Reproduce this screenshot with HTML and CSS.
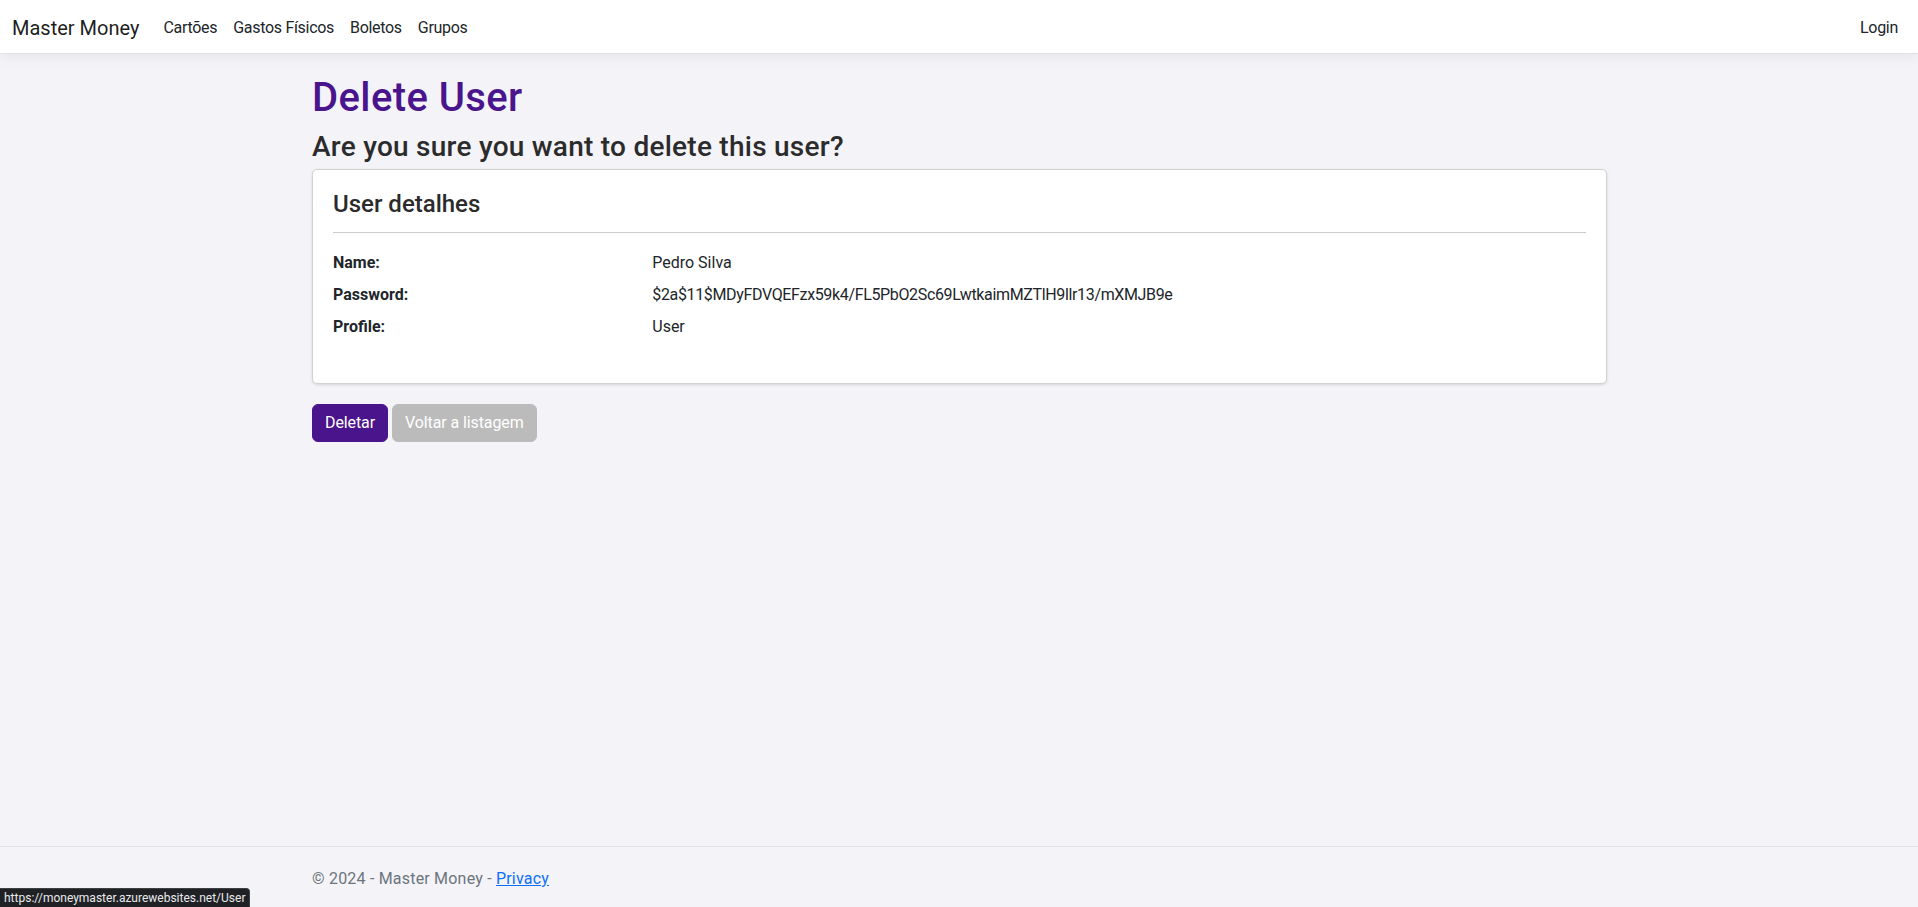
FILE: index.html
```html
<!DOCTYPE html>
<html lang="pt">
<head>
<meta charset="utf-8">
<title>Delete User - Master Money</title>
<link rel="stylesheet" href="styles.css">
</head>
<body>
<header class="navbar">
  <a class="brand" href="#">Master Money</a>
  <nav class="nav-links">
    <a class="nav-link" href="#">Cartões</a>
    <a class="nav-link" href="#">Gastos Físicos</a>
    <a class="nav-link" href="#">Boletos</a>
    <a class="nav-link" href="#">Grupos</a>
  </nav>
  <a class="nav-link login" href="#">Login</a>
</header>

<main class="container">
  <h1 class="title">Delete User</h1>
  <h3 class="question">Are you sure you want to delete this user?</h3>

  <section class="card">
    <h4 class="card-title">User detalhes</h4>
    <hr class="divider">
    <dl class="details">
      <dt>Name:</dt>
      <dd>Pedro Silva</dd>
      <dt>Password:</dt>
      <dd class="hash">$2a$11$MDyFDVQEFzx59k4/FL5PbO2Sc69LwtkaimMZTlH9llr13/mXMJB9e</dd>
      <dt>Profile:</dt>
      <dd>User</dd>
    </dl>
  </section>

  <div class="actions">
    <button class="btn btn-primary" type="button">Deletar</button>
    <a class="btn btn-secondary" href="#">Voltar a listagem</a>
  </div>
</main>

<footer class="footer">
  <div class="container footer-text">&copy; 2024 - Master Money - <a class="footer-link" href="#">Privacy</a></div>
</footer>

<div class="status-url">https://moneymaster.azurewebsites.net/User</div>
</body>
</html>
```

FILE: styles.css
```css
* {
  box-sizing: border-box;
}

html, body {
  margin: 0;
  padding: 0;
}

body {
  position: relative;
  min-height: 907px;
  background: #f4f3f8;
  color: #212529;
  font-family: Roboto, "Liberation Sans", Arial, sans-serif;
  font-size: 16px;
  line-height: 1.5;
}

a {
  text-decoration: none;
}

.navbar {
  display: flex;
  align-items: center;
  height: 54px;
  padding: 2px 12px 0;
  background: #ffffff;
  border-bottom: 1px solid #dee2e6;
  box-shadow: 0 4px 12px rgba(0, 0, 0, 0.05);
}

.brand {
  font-size: 20px;
  line-height: 30px;
  color: rgba(0, 0, 0, 0.9);
  margin-right: 16px;
}

.nav-links {
  display: flex;
}

.nav-link {
  padding: 8px;
  color: #212529;
  font-size: 16px;
  line-height: 24px;
  letter-spacing: -0.3px;
}

.login {
  margin-left: auto;
}

.container {
  width: 1320px;
  margin: 0 auto;
  padding: 0 12px 0 13px;
}

main.container {
  padding-top: 20px;
}

.title {
  margin: 0 0 8px;
  font-size: 40px;
  font-weight: 500;
  line-height: 1.2;
  letter-spacing: 0.4px;
  color: #4a148c;
}

.question {
  margin: 0 0 5px;
  font-size: 28px;
  font-weight: 500;
  line-height: 1.2;
  letter-spacing: 0.25px;
  color: #2b2b2b;
}

.card {
  background: #ffffff;
  border: 1px solid #d2d2d2;
  border-radius: 5px;
  box-shadow: 0 1px 3px rgba(0, 0, 0, 0.12);
  padding: 20px 20px 20px;
  margin-bottom: 20px;
}

.card-title {
  margin: 0;
  font-size: 24px;
  font-weight: 500;
  line-height: 1.2;
  color: #2b2b2b;
}

.divider {
  margin: 14px 0 18px;
  border: 0;
  border-top: 1px solid #cccccc;
}

.details {
  display: grid;
  grid-template-columns: 25% 75%;
  margin: 0 -12px 16px;
}

.details dt,
.details dd {
  padding: 0 12px;
  margin: 0 0 8px;
}

.details dt {
  font-weight: 700;
}

.details .hash {
  letter-spacing: -0.35px;
}

.actions {
  display: flex;
  gap: 4px;
}

.btn {
  display: inline-block;
  padding: 6px 12px;
  font-family: inherit;
  font-size: 16px;
  line-height: 24px;
  letter-spacing: -0.1px;
  border: 1px solid transparent;
  border-radius: 6px;
  color: #ffffff;
  cursor: pointer;
}

.btn-primary {
  background: #4a148c;
  border-color: #4a148c;
}

.btn-secondary {
  background: #bbbbbb;
  border-color: #bbbbbb;
}

.footer {
  position: absolute;
  left: 0;
  bottom: 0;
  width: 100%;
  border-top: 1px solid #dee2e6;
  color: #6c757d;
  white-space: nowrap;
}

.footer-text {
  padding-top: 3px;
  line-height: 57px;
  letter-spacing: 0.2px;
}

.footer-link {
  color: #0d6efd;
  text-decoration: underline;
}

.status-url {
  position: fixed;
  left: 0;
  bottom: 0;
  height: 19px;
  padding: 0 4px;
  background: #202124;
  border: 1px solid #3c4043;
  border-left: 0;
  border-bottom: 0;
  border-radius: 0 4px 0 0;
  color: #e8eaed;
  font-size: 12px;
  line-height: 18px;
}
```
